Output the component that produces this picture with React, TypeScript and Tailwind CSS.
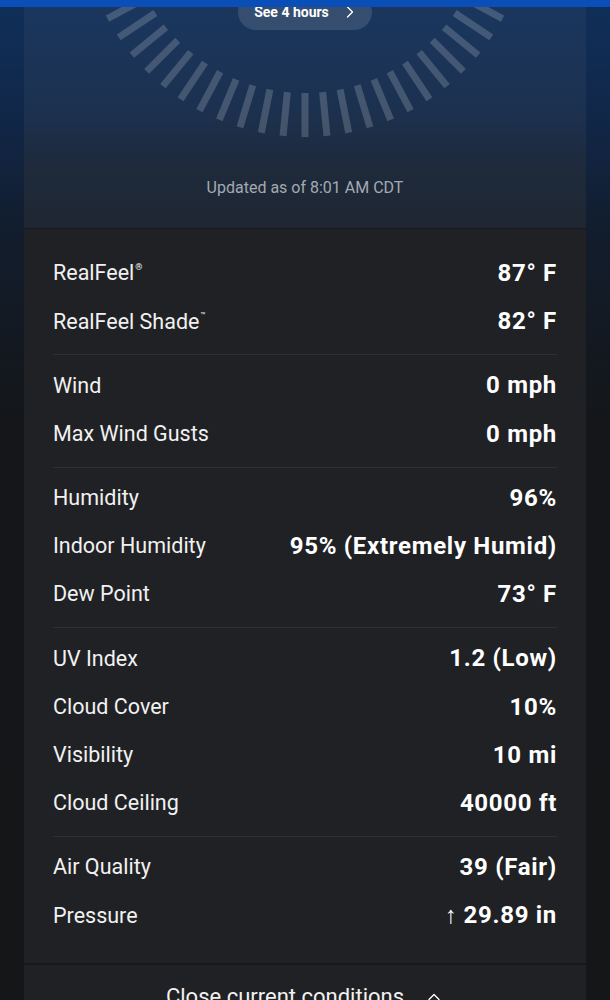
import React from "react";
import { ChevronRight, ChevronUp } from "lucide-react";

type Row = { label: React.ReactNode; value: React.ReactNode };

const groups: Row[][] = [
  [
    {
      label: (
        <>
          RealFeel<sup className="relative -top-[2px] ml-[1px] text-[9px] align-super">®</sup>
        </>
      ),
      value: "87° F",
    },
    {
      label: (
        <>
          RealFeel Shade<sup className="relative -top-[2px] ml-[1px] text-[8px] align-super">™</sup>
        </>
      ),
      value: "82° F",
    },
  ],
  [
    { label: "Wind", value: "0 mph" },
    { label: "Max Wind Gusts", value: "0 mph" },
  ],
  [
    { label: "Humidity", value: "96%" },
    { label: "Indoor Humidity", value: "95% (Extremely Humid)" },
    { label: "Dew Point", value: "73° F" },
  ],
  [
    { label: "UV Index", value: "1.2 (Low)" },
    { label: "Cloud Cover", value: "10%" },
    { label: "Visibility", value: "10 mi" },
    { label: "Cloud Ceiling", value: "40000 ft" },
  ],
  [
    { label: "Air Quality", value: "39 (Fair)" },
    {
      label: "Pressure",
      value: (
        <>
          <span className="mr-[6px] font-normal">↑</span>29.89 in
        </>
      ),
    },
  ],
];

function Dial() {
  const c = 224;
  const r1 = 180;
  const r2 = 224;
  const ticks = Array.from({ length: 64 }, (_, i) => {
    const a = Math.PI / 2 + (i * 2 * Math.PI) / 64;
    return {
      x1: c + r1 * Math.cos(a),
      y1: c + r1 * Math.sin(a),
      x2: c + r2 * Math.cos(a),
      y2: c + r2 * Math.sin(a),
    };
  });
  return (
    <svg width="448" height="448" viewBox="0 0 448 448" className="block">
      {ticks.map((t, i) => (
        <line
          key={i}
          x1={t.x1}
          y1={t.y1}
          x2={t.x2}
          y2={t.y2}
          stroke="#ffffff"
          strokeOpacity="0.18"
          strokeWidth="7"
        />
      ))}
    </svg>
  );
}

export default function App() {
  return (
    <div className="relative h-[1000px] w-full overflow-hidden bg-[linear-gradient(180deg,#0f2f5a_0px,#112748_120px,#121d2d_230px,#141619_420px,#151618_1000px)] font-['Roboto',sans-serif] text-[#f3f3f3]">
      <div className="absolute inset-x-0 top-0 z-10 h-[7px] bg-[#0a4fb7]" />
      <div className="mx-auto -mt-[311px] w-[562px]">
        <section className="border-b border-[#161a20] bg-[linear-gradient(180deg,#1b3a66_0px,#1a375f_311px,#1c3150_420px,#1e2a3b_480px,#1f2631_540px)]">
          <div className="relative mx-auto h-[448px] w-[448px]">
            <Dial />
            <div className="absolute left-1/2 top-[305px] flex h-9 w-[134px] -translate-x-1/2 items-center justify-center gap-[11px] rounded-full bg-white/[0.12] pl-[4px]">
              <span className="text-[14px] font-bold text-white">See 4 hours</span>
              <ChevronRight size={20} strokeWidth={1.6} className="text-white" />
            </div>
          </div>
          <p className="mt-[39px] pb-[28px] text-center text-[16px] leading-[24px] font-normal text-[#a3aab4]">
            Updated as of 8:01 AM CDT
          </p>
        </section>
        <section className="bg-[#202124] px-[29px] pt-[14px] pb-[15px]">
          {groups.map((g, gi) => (
            <div
              key={gi}
              className={
                gi === 0
                  ? "pt-[6px] pb-[9px]"
                  : "border-t border-[#2f3033] pt-[6px] pb-[9px]"
              }
            >
              {g.map((r, ri) => (
                <div key={ri} className="flex h-[48.2px] items-center justify-between">
                  <span className="text-[21.5px] leading-none text-[#f1f1f1]">{r.label}</span>
                  <span className="text-[24px] leading-none font-bold tracking-[0.7px] text-white">
                    {r.value}
                  </span>
                </div>
              ))}
            </div>
          ))}
        </section>
        <section className="border-t-2 border-[#17181b] bg-[#202124] pt-[19px] pb-[20px]">
          <div className="flex items-center justify-center gap-[20px]">
            <span className="text-[22px] leading-[26px] text-[#f1f1f1]">Close current conditions</span>
            <ChevronUp size={20} strokeWidth={1.6} className="text-white" />
          </div>
        </section>
      </div>
    </div>
  );
}
